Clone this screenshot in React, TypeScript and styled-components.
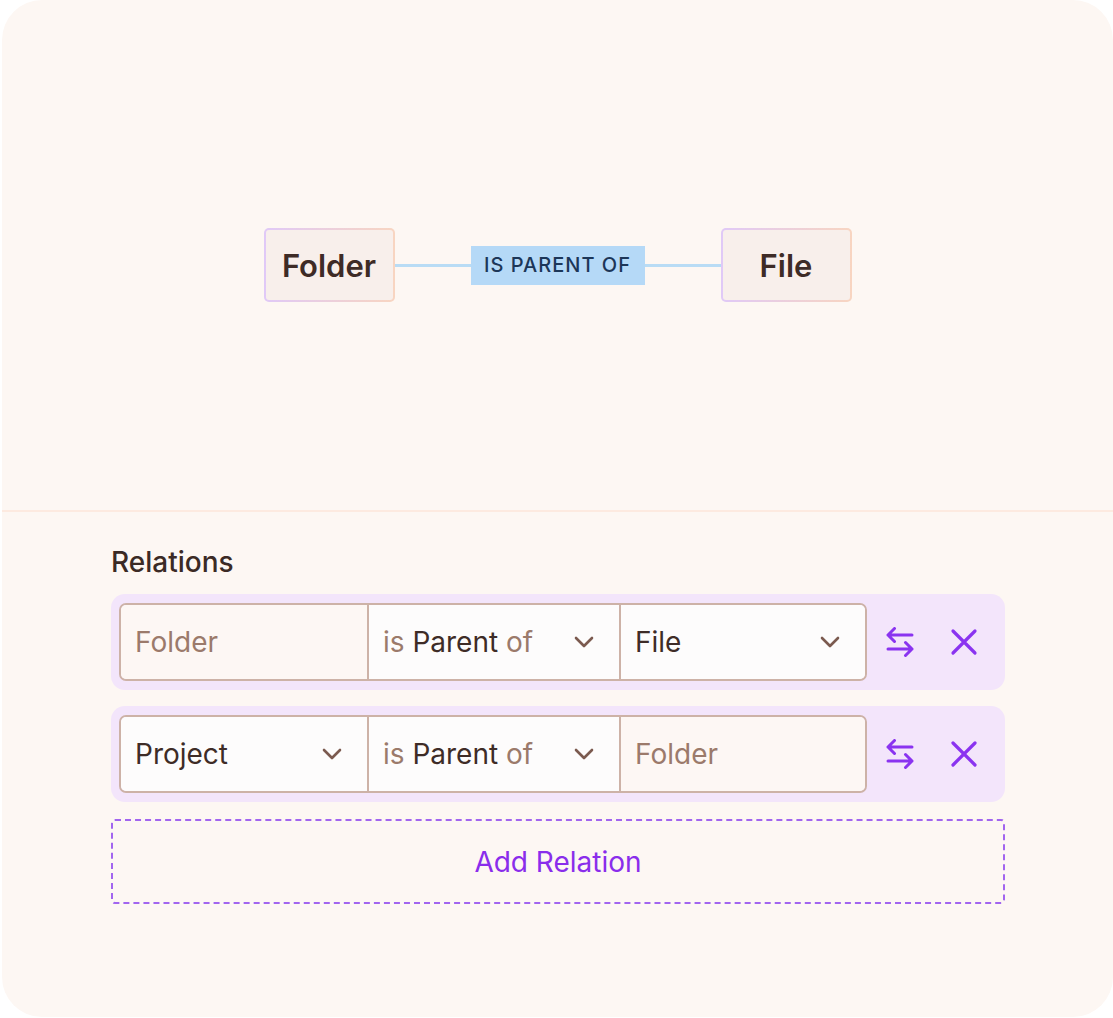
import React from 'react';
import styled, { createGlobalStyle } from 'styled-components';

const GlobalStyle = createGlobalStyle`
  html, body {
    margin: 0;
    padding: 0;
    background: #ffffff;
  }
  body {
    font-family: Inter, "Noto Sans", sans-serif;
  }
`;

type Relation = {
  from: string | null;
  to: string | null;
};

const relations: Relation[] = [
  { from: null, to: 'File' },
  { from: 'Project', to: null },
];

const Chevron = () => (
  <svg width="20" height="12" viewBox="0 0 20 12" fill="none">
    <path d="M2 2l8 8 8-8" stroke="#7b5a4f" strokeWidth="2.6" strokeLinecap="round" strokeLinejoin="round" />
  </svg>
);

const SwapIcon = () => (
  <svg width="30" height="30" viewBox="0 0 30 30" fill="none">
    <path d="M3 8h24M9.5 1.5L3 8l6.5 6.5" stroke="#8a33f0" strokeWidth="3" strokeLinecap="round" strokeLinejoin="round" />
    <path d="M3 22h24M20.5 15.5L27 22l-6.5 6.5" stroke="#8a33f0" strokeWidth="3" strokeLinecap="round" strokeLinejoin="round" />
  </svg>
);

const CloseIcon = () => (
  <svg width="28" height="28" viewBox="0 0 28 28" fill="none">
    <path d="M3 3l22 22M25 3L3 25" stroke="#8a33f0" strokeWidth="3.2" strokeLinecap="round" />
  </svg>
);

const App: React.FC = () => {
  return (
    <>
      <GlobalStyle />
      <Card>
        <Preview>
          <Diagram>
            <Node>Folder</Node>
            <Connector />
            <EdgeLabel>IS PARENT OF</EdgeLabel>
            <Connector />
            <Node>File</Node>
          </Diagram>
        </Preview>
        <Editor>
          <Heading>Relations</Heading>
          <List>
            {relations.map((r, i) => (
              <Row key={i}>
                <SelectGroup>
                  <Segment $filled={!!r.from}>
                    {r.from ? (
                      <>
                        <Value>{r.from}</Value>
                        <Chevron />
                      </>
                    ) : (
                      <Placeholder>Folder</Placeholder>
                    )}
                  </Segment>
                  <Segment $filled>
                    <Value>
                      <Muted>is</Muted> Parent <Muted>of</Muted>
                    </Value>
                    <Chevron />
                  </Segment>
                  <Segment $filled={!!r.to}>
                    {r.to ? (
                      <>
                        <Value>{r.to}</Value>
                        <Chevron />
                      </>
                    ) : (
                      <Placeholder>Folder</Placeholder>
                    )}
                  </Segment>
                </SelectGroup>
                <IconButton aria-label="Swap">
                  <SwapIcon />
                </IconButton>
                <IconButton aria-label="Remove">
                  <CloseIcon />
                </IconButton>
              </Row>
            ))}
            <AddButton>Add Relation</AddButton>
          </List>
        </Editor>
      </Card>
    </>
  );
};

const Card = styled.div`
  margin-left: 2px;
  width: 1111px;
  height: 1017px;
  border-radius: 40px;
  background: #fdf7f3;
  display: flex;
  flex-direction: column;
  overflow: hidden;
`;

const Preview = styled.div`
  height: 512px;
  flex-shrink: 0;
  display: flex;
  justify-content: center;
  padding-top: 228px;
  box-sizing: border-box;
  border-bottom: 2px solid #fdeae0;
`;

const Diagram = styled.div`
  display: flex;
  align-items: center;
  height: 74px;
`;

const Node = styled.div`
  width: 131px;
  height: 74px;
  box-sizing: border-box;
  display: flex;
  align-items: center;
  justify-content: center;
  border: 2px solid transparent;
  border-radius: 5px;
  background: linear-gradient(#f8efeb, #f8efeb) padding-box,
    linear-gradient(90deg, #e0c9f7, #f8d5c1) border-box;
  font-size: 31px;
  font-weight: 600;
  color: #3e2b26;
`;

const Connector = styled.div`
  width: 76px;
  height: 3px;
  background: #b9dcf5;
`;

const EdgeLabel = styled.div`
  width: 174px;
  height: 39px;
  display: flex;
  align-items: center;
  justify-content: center;
  background: #b5d9f7;
  color: #1c3658;
  font-size: 20px;
  font-weight: 500;
  letter-spacing: 1px;
`;

const Editor = styled.div`
  padding: 33px 108px 0 109px;
  display: flex;
  flex-direction: column;
`;

const Heading = styled.div`
  font-size: 28px;
  font-weight: 500;
  color: #3b2a25;
  line-height: 34px;
  margin-bottom: 15px;
`;

const List = styled.div`
  display: flex;
  flex-direction: column;
  gap: 16px;
`;

const Row = styled.div`
  display: flex;
  align-items: center;
  padding: 9px 16px 9px 8px;
  border-radius: 14px;
  background: #f3e5fb;
`;

const SelectGroup = styled.div`
  display: grid;
  grid-template-columns: 246px 252px 246px;
  width: 748px;
  height: 78px;
  box-sizing: border-box;
  border: 2px solid #cdb2a7;
  border-radius: 7px;
  overflow: hidden;
  margin-right: 9px;
`;

const Segment = styled.div<{ $filled?: boolean }>`
  display: flex;
  align-items: center;
  justify-content: space-between;
  padding: 0 25px 0 14px;
  background: ${(p) => (p.$filled ? '#fdfcfc' : '#fdf7f4')};
  & + & {
    border-left: 2px solid #cdb2a7;
  }
`;

const Value = styled.span`
  font-size: 28px;
  color: #3e2c27;
`;

const Muted = styled.span`
  color: #9b7a6b;
`;

const Placeholder = styled.span`
  font-size: 28px;
  color: #9b7a6b;
`;

const IconButton = styled.button`
  width: 48px;
  height: 48px;
  display: flex;
  align-items: center;
  justify-content: center;
  border: none;
  background: transparent;
  padding: 0;
  cursor: pointer;
  & + & {
    margin-left: 16px;
  }
`;

const AddButton = styled.button`
  margin-top: 1px;
  height: 85px;
  border: 2px dashed #a265ef;
  border-radius: 4px;
  background: transparent;
  color: #8a2deb;
  font-family: Inter, "Noto Sans", sans-serif;
  font-size: 28px;
  cursor: pointer;
`;

export default App;
